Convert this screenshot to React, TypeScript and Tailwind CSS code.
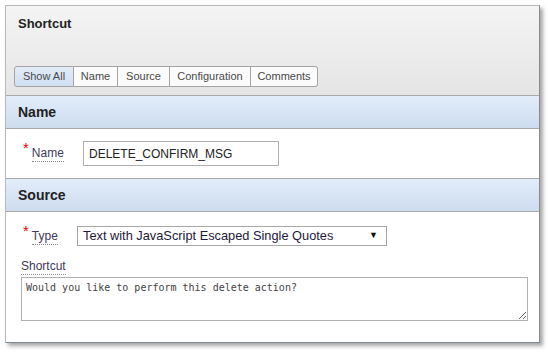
const tabs = [
  { label: 'Show All', w: 'w-[60px]', active: true },
  { label: 'Name', w: 'w-[44px]' },
  { label: 'Source', w: 'w-[52px]' },
  { label: 'Configuration', w: 'w-[81px]' },
  { label: 'Comments', w: 'w-[67px]' },
];

function SectionHeader({ title, top }: { title: string; top?: boolean }) {
  return (
    <div
      className={`${top ? 'h-[34px] border-t' : 'h-[33px]'} shrink-0 flex items-center pl-[12px] border-b border-[#a9a9a9] bg-gradient-to-b from-[#e2edfa] to-[#cddcee]`}
    >
      <h2 className="text-[14px] font-bold text-[#222]">{title}</h2>
    </div>
  );
}

function Label({ text, required }: { text: string; required?: boolean }) {
  return (
    <div className="flex items-start">
      {required && <span className="text-[#e00] text-[15px] leading-[14px] mr-[3px] -mt-[5px]">*</span>}
      <span className="text-[12px] text-[#3f3a5c] border-b border-dotted border-[#888] leading-[14px] pb-[1px]">
        {text}
      </span>
    </div>
  );
}

export default function App() {
  return (
    <div className="w-[548px] h-[352px] bg-white pt-[5px] pl-[5px] font-['Liberation_Sans',Arial,sans-serif]">
      <div className="w-[535px] h-[338px] bg-white border border-[#b9b9b9] border-r-[#8a8a8a] border-b-[#7c8a98] shadow-[3px_3px_4px_rgba(0,0,0,0.35)] overflow-hidden flex flex-col">
        {/* region header */}
        <div className="h-[90px] shrink-0 bg-gradient-to-b from-[#f4f4f4] to-[#e5e5e5] border-b border-[#a9a9a9] pl-[8px] pt-[10px]">
          <h1 className="pl-[4px] text-[13px] font-bold text-[#222] leading-[16px]">Shortcut</h1>
          <div className="mt-[34px] flex">
            {tabs.map((t, i) => (
              <div
                key={t.label}
                className={`${t.w} h-[21px] flex items-center justify-center text-[11px] text-[#4a4a4a] border border-[#a4a4a4] ${i > 0 ? 'border-l-0' : 'rounded-l-[3px]'} ${i === tabs.length - 1 ? 'rounded-r-[3px]' : ''} ${t.active ? 'bg-gradient-to-b from-[#e3ecf8] to-[#cfdff2]' : 'bg-[#fbfbfb]'}`}
              >
                {t.label}
              </div>
            ))}
          </div>
        </div>

        <SectionHeader title="Name" />
        <div className="h-[49px] shrink-0 flex items-center pl-[17px]">
          <div className="w-[60px] pt-[1px]">
            <Label text="Name" required />
          </div>
          <div className="w-[196px] h-[25px] border border-[#b0b0b0] flex items-center pl-[5px] text-[12px] text-[#222]">
            DELETE_CONFIRM_MSG
          </div>
        </div>

        <SectionHeader title="Source" top />
        <div className="flex-1 pl-[15px] pr-[11px]">
          <div className="flex items-center pl-[2px] mt-[14px]">
            <div className="w-[54px] pt-[1px]">
              <Label text="Type" required />
            </div>
            <div className="w-[310px] h-[20px] border border-[#a8a8a8] flex items-center justify-between pl-[5px] pr-[8px] text-[12.8px] text-[#1e1a3c]">
              <span>Text with JavaScript Escaped Single Quotes</span>
              <span className="text-[9px] text-[#111]">▼</span>
            </div>
          </div>
          <div className="mt-[13px] flex">
            <Label text="Shortcut" />
          </div>
          <textarea
            readOnly
            className="mt-[2px] block w-[507px] h-[44px] border border-[#b0b0b0] px-[4px] py-[4px] text-[10px] leading-[12px] text-[#444] font-['DejaVu_Sans_Mono',monospace] outline-none resize"
            value="Would you like to perform this delete action?"
          />
        </div>
      </div>
    </div>
  );
}
